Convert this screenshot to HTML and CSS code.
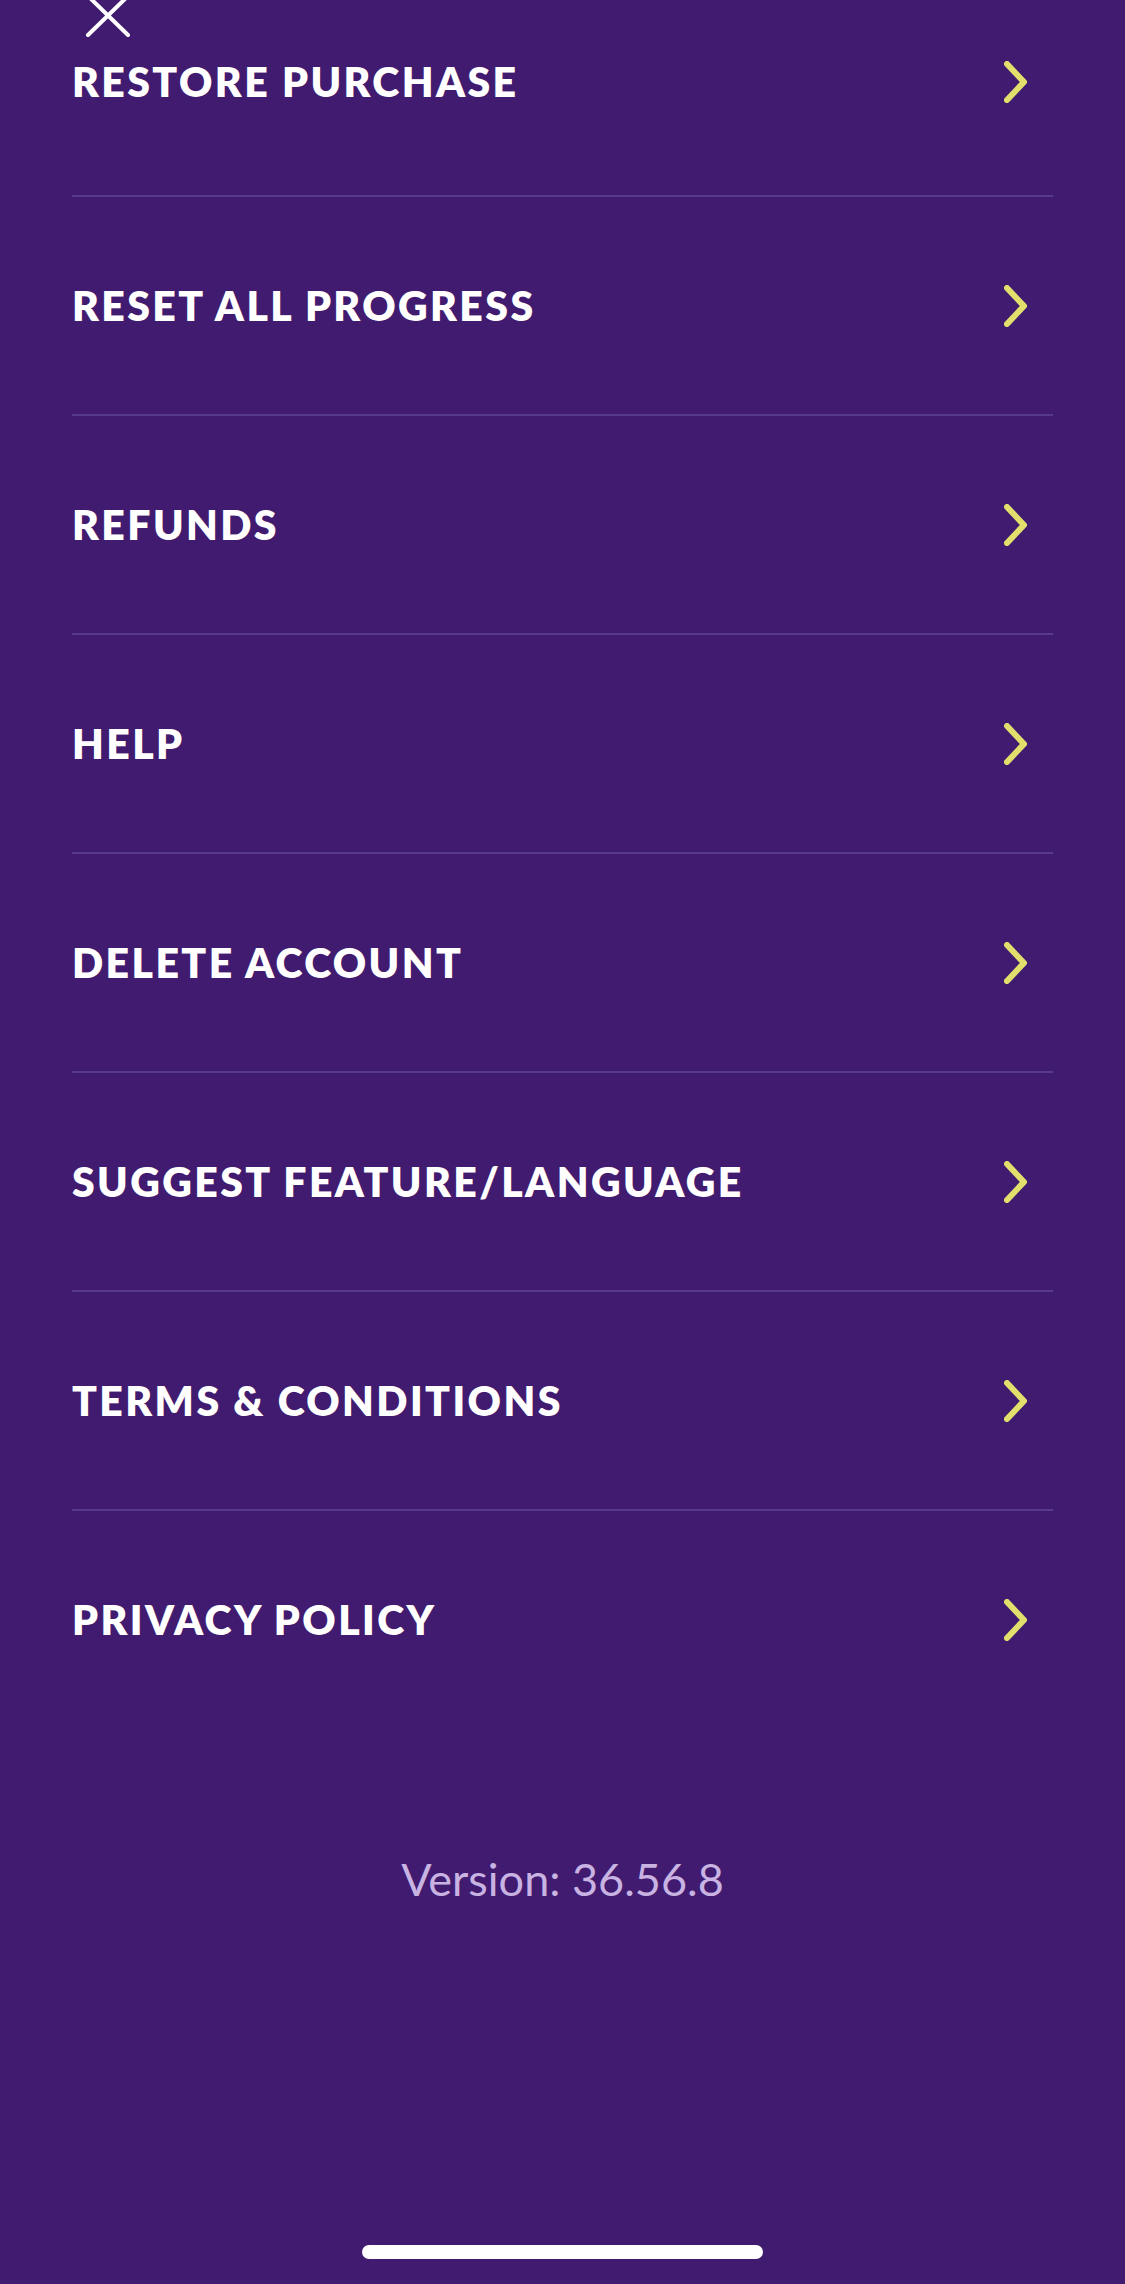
FILE: index.html
```html
<!DOCTYPE html>
<html lang="en">
<head>
  <meta charset="UTF-8">
  <title>Settings</title>
  <meta name="viewport" content="width=device-width, initial-scale=1.0">
  <link rel="stylesheet" href="styles.css">
</head>
<body>
  <div class="screen">
    <button class="close" aria-label="Close">
      <svg width="46" height="44" viewBox="0 0 46 44">
        <path d="M3 2 L43 41 M43 2 L3 41" stroke="#fff" stroke-width="4" stroke-linecap="round" fill="none"/>
      </svg>
    </button>

    <ul class="menu">
      <li class="item">
        <span>RESTORE PURCHASE</span>
        <svg class="chev" width="24" height="42" viewBox="0 0 24 42"><polyline points="3,3 20,21 3,39"/></svg>
      </li>
      <li class="item">
        <span>RESET ALL PROGRESS</span>
        <svg class="chev" width="24" height="42" viewBox="0 0 24 42"><polyline points="3,3 20,21 3,39"/></svg>
      </li>
      <li class="item">
        <span>REFUNDS</span>
        <svg class="chev" width="24" height="42" viewBox="0 0 24 42"><polyline points="3,3 20,21 3,39"/></svg>
      </li>
      <li class="item">
        <span>HELP</span>
        <svg class="chev" width="24" height="42" viewBox="0 0 24 42"><polyline points="3,3 20,21 3,39"/></svg>
      </li>
      <li class="item">
        <span>DELETE ACCOUNT</span>
        <svg class="chev" width="24" height="42" viewBox="0 0 24 42"><polyline points="3,3 20,21 3,39"/></svg>
      </li>
      <li class="item">
        <span>SUGGEST FEATURE/LANGUAGE</span>
        <svg class="chev" width="24" height="42" viewBox="0 0 24 42"><polyline points="3,3 20,21 3,39"/></svg>
      </li>
      <li class="item">
        <span>TERMS &amp; CONDITIONS</span>
        <svg class="chev" width="24" height="42" viewBox="0 0 24 42"><polyline points="3,3 20,21 3,39"/></svg>
      </li>
      <li class="item">
        <span>PRIVACY POLICY</span>
        <svg class="chev" width="24" height="42" viewBox="0 0 24 42"><polyline points="3,3 20,21 3,39"/></svg>
      </li>
    </ul>

    <p class="version">Version: 36.56.8</p>

    <div class="home-bar"></div>
  </div>
</body>
</html>
```

FILE: styles.css
```css
html, body {
  margin: 0;
  padding: 0;
  background: #411b6f;
}

body {
  font-family: Lato, "Open Sans", sans-serif;
  color: #fff;
}

.screen {
  position: relative;
  height: 2284px;
  overflow: hidden;
  padding: 0 72px;
  box-sizing: border-box;
}

.close {
  position: absolute;
  top: -6px;
  left: 85px;
  padding: 0;
  border: none;
  background: none;
  cursor: pointer;
}

.close svg {
  display: block;
}

.menu {
  list-style: none;
  margin: -22px 0 0;
  padding: 0;
}

.item {
  display: flex;
  align-items: center;
  justify-content: space-between;
  height: 217px;
  border-bottom: 2px solid #573a8c;
  padding-right: 25px;
  font-size: 41px;
  font-weight: 800;
  letter-spacing: 2.4px;
}

.item:first-child {
  padding-bottom: 10px;
  height: 207px;
}

.item:last-child {
  border-bottom: none;
}

.chev {
  display: block;
  flex-shrink: 0;
}

.chev polyline {
  fill: none;
  stroke: #e2df6c;
  stroke-width: 6;
  stroke-linecap: round;
  stroke-linejoin: round;
}

.version {
  margin: 124px 0 0;
  text-align: center;
  font-size: 45px;
  font-weight: 400;
  color: #c8b3e3;
}

.home-bar {
  position: absolute;
  left: 362px;
  bottom: 25px;
  width: 401px;
  height: 14px;
  border-radius: 7px;
  background: #fff;
}
```
